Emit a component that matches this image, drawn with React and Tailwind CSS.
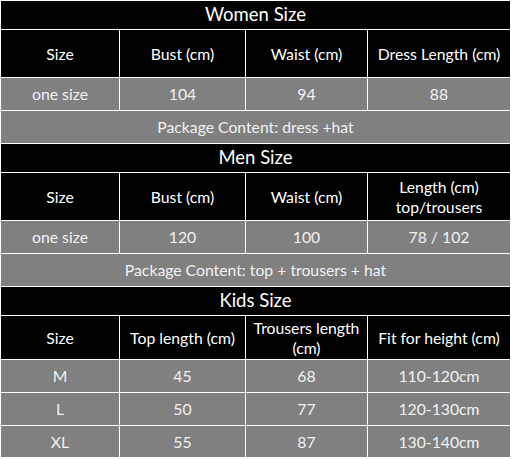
const cols = "grid grid-cols-[118px_125px_121px_142px] gap-px"

function Title({ children }) {
  return (
    <div className="h-[28px] bg-black text-white text-[18.5px] flex items-center justify-center">
      {children}
    </div>
  )
}

function HeadRow({ cells, h = "h-[47px]" }) {
  return (
    <div className={cols}>
      {cells.map((c, i) => (
        <div key={i} className={`${h} bg-black text-white text-[15.75px] leading-[20px] flex items-center justify-center text-center`}>
          {c}
        </div>
      ))}
    </div>
  )
}

function DataRow({ cells, h = "h-[32px]" }) {
  return (
    <div className={cols}>
      {cells.map((c, i) => (
        <div key={i} className={`${h} bg-[#808080] text-[#f2f2f2] text-[15.75px] flex items-center justify-center`}>
          {c}
        </div>
      ))}
    </div>
  )
}

function Note({ children }) {
  return (
    <div className="h-[32px] bg-[#808080] text-[#f2f2f2] text-[15.75px] flex items-center justify-center">
      {children}
    </div>
  )
}

export default function App() {
  return (
    <div className="w-[511px] h-[459px] bg-white p-px" style={{ fontFamily: "Lato, 'Open Sans', sans-serif" }}>
      <div className="flex flex-col gap-px">
        {/* Women */}
        <Title>Women Size</Title>
        <HeadRow cells={["Size", "Bust (cm)", "Waist (cm)", "Dress Length (cm)"]} />
        <DataRow cells={["one size", "104", "94", "88"]} />
        <Note>Package Content: dress +hat</Note>

        {/* Men */}
        <Title>Men Size</Title>
        <HeadRow
          cells={[
            "Size",
            "Bust (cm)",
            "Waist (cm)",
            <span>Length (cm)<br />top/trousers</span>,
          ]}
        />
        <DataRow cells={["one size", "120", "100", "78 / 102"]} />
        <Note>Package Content: top + trousers + hat</Note>

        {/* Kids */}
        <Title>Kids Size</Title>
        <HeadRow
          h="h-[43px]"
          cells={[
            "Size",
            "Top length (cm)",
            <span>Trousers length<br />(cm)</span>,
            "Fit for height (cm)",
          ]}
        />
        <DataRow cells={["M", "45", "68", "110-120cm"]} />
        <DataRow cells={["L", "50", "77", "120-130cm"]} />
        <DataRow cells={["XL", "55", "87", "130-140cm"]} h="h-[31px]" />
      </div>
    </div>
  )
}
